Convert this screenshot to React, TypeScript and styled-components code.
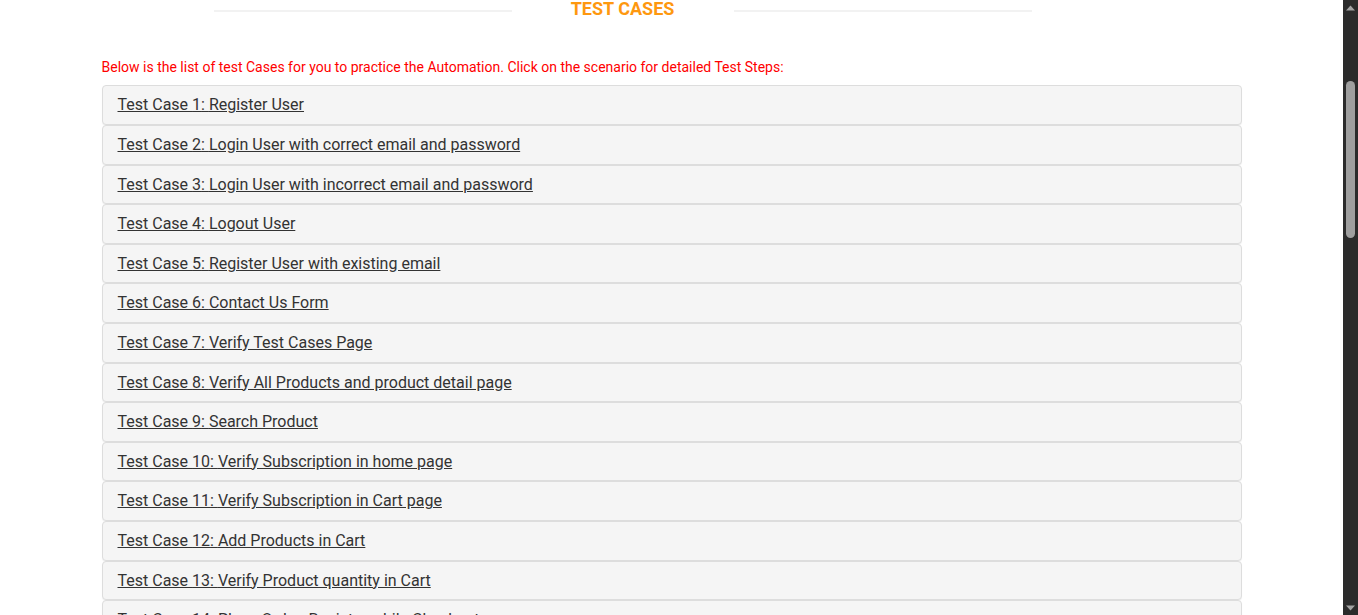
import React from "react";
import styled, { createGlobalStyle } from "styled-components";

const Global = createGlobalStyle`
  html, body {
    margin: 0;
    height: 100%;
    background: #ffffff;
    color: #333333;
    font-family: Roboto, "Liberation Sans", Arial, sans-serif;
    overflow: hidden;
  }
  * { box-sizing: border-box; }
`;

const Viewport = styled.div`
  display: flex;
  height: 100vh;
  overflow: hidden;
`;

const Page = styled.div`
  flex: 1;
  min-width: 0;
  overflow: hidden;
`;

const ScrollBar = styled.div`
  width: 15px;
  flex-shrink: 0;
  background: #2b2b2b;
  display: flex;
  flex-direction: column;
  align-items: center;
`;

const ArrowButton = styled.div`
  height: 15px;
  width: 15px;
  display: flex;
  align-items: center;
  justify-content: center;
`;

const Track = styled.div`
  flex: 1;
  width: 100%;
  display: flex;
  flex-direction: column;
  align-items: center;
`;

const Thumb = styled.div<{ $top: number; $size: number }>`
  margin-top: ${(p) => p.$top}px;
  height: ${(p) => p.$size}px;
  width: 9px;
  border-radius: 5px;
  background: #9f9f9f;
`;

const Container = styled.main`
  width: 1170px;
  margin: 0 auto;
  padding: 0 15px;
`;

const TitleWrap = styled.div`
  width: 818px;
  margin-left: 112px;
  position: relative;
  height: 20px;
  display: flex;
  justify-content: center;
  &::before {
    content: "";
    position: absolute;
    left: 0;
    right: 0;
    top: 10px;
    height: 0;
    border: 1px solid #f2f2f2;
  }
`;

const Title = styled.h2`
  position: relative;
  z-index: 1;
  margin: 0;
  width: 222px;
  height: 20px;
  padding-top: 1px;
  background: #ffffff;
  text-align: center;
  color: #fe980f;
  font-family: Roboto, "Liberation Sans", sans-serif;
  font-size: 18px;
  font-weight: 700;
  line-height: 15px;
  text-transform: uppercase;
`;

const Intro = styled.p`
  margin: 39px 0 9.35px;
  color: #ff0000;
  font-size: 14px;
  line-height: 17px;
`;

const List = styled.div`
  display: flex;
  flex-direction: column;
`;

const Panel = styled.div`
  border: 1px solid #dddddd;
  border-radius: 4px;
  background: #f5f5f5;
  box-shadow: 0 1px 1px rgba(0, 0, 0, 0.05);
`;

const PanelTitle = styled.h4`
  margin: 0;
  padding: 10px 15px;
  font-size: 16px;
  font-weight: 400;
  line-height: 17.615px;
`;

const CaseLink = styled.a`
  color: #333333;
  text-decoration: underline;
  cursor: pointer;
`;

const cases = [
  "Register User",
  "Login User with correct email and password",
  "Login User with incorrect email and password",
  "Logout User",
  "Register User with existing email",
  "Contact Us Form",
  "Verify Test Cases Page",
  "Verify All Products and product detail page",
  "Search Product",
  "Verify Subscription in home page",
  "Verify Subscription in Cart page",
  "Add Products in Cart",
  "Verify Product quantity in Cart",
  "Place Order: Register while Checkout",
];

const Arrow = ({ down }: { down?: boolean }) => (
  <svg width="9" height="6" viewBox="0 0 9 6">
    <polygon
      points={down ? "0,0.5 9,0.5 4.5,5.5" : "0,5.5 9,5.5 4.5,0.5"}
      fill="#a3a3a3"
    />
  </svg>
);

export default function App() {
  return (
    <Viewport>
      <Global />
      <Page>
        <Container>
          <TitleWrap>
            <Title>Test Cases</Title>
          </TitleWrap>
          <Intro>
            Below is the list of test Cases for you to practice the Automation. Click on the scenario
            for detailed Test Steps:
          </Intro>
          <List>
            {cases.map((c, i) => (
              <Panel key={i}>
                <PanelTitle>
                  <CaseLink>
                    Test Case {i + 1}: {c}
                  </CaseLink>
                </PanelTitle>
              </Panel>
            ))}
          </List>
        </Container>
      </Page>
      <ScrollBar>
        <ArrowButton>
          <Arrow />
        </ArrowButton>
        <Track>
          <Thumb $top={66} $size={157} />
        </Track>
        <ArrowButton>
          <Arrow down />
        </ArrowButton>
      </ScrollBar>
    </Viewport>
  );
}
